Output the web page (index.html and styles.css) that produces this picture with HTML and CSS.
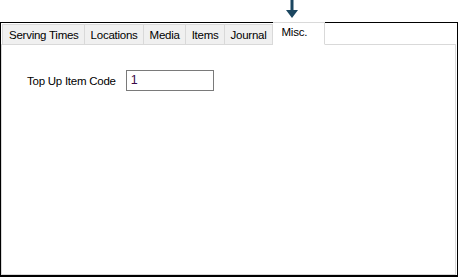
FILE: index.html
```html
<!DOCTYPE html>
<html lang="en">
<head>
  <meta charset="UTF-8" />
  <title>Misc.</title>
  <link rel="stylesheet" href="styles.css">
</head>
<body>
  <svg class="pointer" width="14" height="20" viewBox="0 0 14 20">
    <rect x="5.5" y="0" width="3" height="11" fill="#1b4660"/>
    <polygon points="1,10 13,10 7,18" fill="#1b4660"/>
  </svg>
  <div class="window">
    <div class="tabs">
      <div class="tab">Serving Times</div>
      <div class="tab">Locations</div>
      <div class="tab">Media</div>
      <div class="tab">Items</div>
      <div class="tab">Journal</div>
      <div class="tab active">Misc.</div>
    </div>
    <div class="panel">
      <div class="field">
        <label for="topup">Top Up Item Code</label>
        <div class="input" id="topup">1</div>
      </div>
    </div>
  </div>
</body>
</html>
```
FILE: styles.css
```css
* { margin: 0; padding: 0; box-sizing: border-box; }
html, body {
  width: 459px; height: 277px; overflow: hidden;
  background: #fff; font-family: 'Liberation Sans', Arial, sans-serif; font-size: 11.5px;
  letter-spacing: -0.25px; color: #000;
}
.pointer { position: absolute; left: 285px; top: 0; }

.window {
  margin-top: 22px; width: 458px; height: 255px;
  border: 1px solid #000; border-bottom-width: 2px;
  display: flex; flex-direction: column;
  padding: 0 1px 0 0;
}
.tabs {
  display: flex; align-items: flex-end; height: 22px;
  padding-left: 1px; margin-bottom: -1px; position: relative; z-index: 1;
}
.tab {
  height: 21px; padding: 0 5px 0 6px; line-height: 20px;
  background: #f0f0f0; border: 1px solid #d9d9d9; border-left: none;
}
.tab:first-child { border-left: 1px solid #d9d9d9; }
.tab.active {
  height: 23px; background: #fff; border-bottom-color: #fff;
  padding: 0 17px 0 9px; line-height: 19px;
}
.panel {
  flex: 1; border: 1px solid #d9d9d9;
  padding: 25px 0 0 25px;
}
.field { display: flex; align-items: center; gap: 10px; }
.input {
  width: 88px; height: 21px; border: 1px solid #7a7a7a;
  padding: 0 4px; line-height: 19px; color: #3a0a48; font-size: 12.5px;
}
```
